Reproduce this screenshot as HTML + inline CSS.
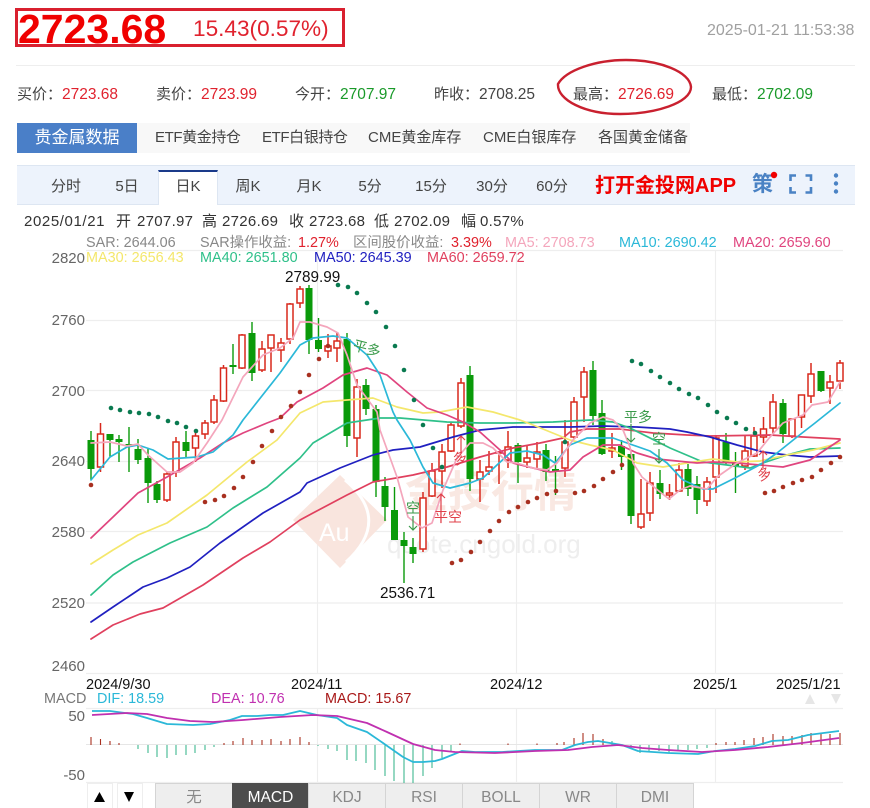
<!DOCTYPE html>
<html lang="zh"><head><meta charset="utf-8"><title>2723.68</title>
<style>
html,body{margin:0;padding:0;background:#fff}
#p{position:relative;width:870px;height:808px;overflow:hidden;background:#fff;font-family:"Liberation Sans","Noto Sans CJK SC",sans-serif;color:#444}
#p div,#p span.a{position:absolute;white-space:nowrap}
svg{position:absolute;left:0;top:0}
svg text{font-family:"Liberation Sans","Noto Sans CJK SC",sans-serif}
.q{top:86px;font-size:15px;line-height:18px}
.q b{font-weight:normal;font-size:15.5px}
.r{color:#e0222e}.g{color:#1a9a2a}
.t{top:123px;height:30px;line-height:30px;font-size:15px;color:#444}
.k{top:171px;height:34px;line-height:32px;font-size:15px;color:#444;text-align:center;width:60px}
.b{top:783px;height:25px;line-height:27px;width:76px;background:#eee;border:1px solid #d4d4d4;border-bottom:0;box-sizing:border-box;text-align:center;font-size:15.5px;color:#888}
</style></head><body><div id="p">
<div style="left:15px;top:8px;width:330px;height:39px;border:3px solid #d9202f;box-sizing:border-box"></div>
<div style="left:18px;top:6px;font-size:41px;line-height:47px;font-weight:bold;color:#f00000">2723.68</div>
<div style="left:193px;top:15px;font-size:22.6px;line-height:28px;color:#e0222e">15.43(0.57%)</div>
<div style="left:707px;top:21px;font-size:16px;line-height:20px;color:#a0a0a0">2025-01-21 11:53:38</div>
<div style="left:16px;top:65px;width:839px;height:1px;background:#eee"></div>

<div class="q" style="left:17px">买价：</div><div class="q r" style="left:62px"><b>2723.68</b></div>
<div class="q" style="left:156px">卖价：</div><div class="q r" style="left:201px"><b>2723.99</b></div>
<div class="q" style="left:295px">今开：</div><div class="q g" style="left:340px"><b>2707.97</b></div>
<div class="q" style="left:434px">昨收：</div><div class="q" style="left:479px"><b>2708.25</b></div>
<div class="q" style="left:573px">最高：</div><div class="q r" style="left:618px"><b>2726.69</b></div>
<div class="q" style="left:712px">最低：</div><div class="q g" style="left:757px"><b>2702.09</b></div>

<div style="left:137px;top:123px;width:553px;height:30px;background:#f8f8f8"></div>
<div style="left:17px;top:123px;width:120px;height:30px;background:#4a7fc8;color:#fff;text-align:center;line-height:30px;font-size:17px">贵金属数据</div>
<div class="t" style="left:155px;letter-spacing:-.4px">ETF黄金持仓</div>
<div class="t" style="left:262px;letter-spacing:-.4px">ETF白银持仓</div>
<div class="t" style="left:368px">CME黄金库存</div>
<div class="t" style="left:483px">CME白银库存</div>
<div class="t" style="left:598px">各国黄金储备</div>

<div style="left:17px;top:165px;width:838px;height:40px;background:#edf3fc;border-top:1px solid #dde6f2;border-bottom:1px solid #dde6f2;box-sizing:border-box"></div>
<div style="left:158px;top:170px;width:60px;height:35px;background:#fff;border-top:2px solid #1a3a8a;box-sizing:border-box;border-left:1px solid #dde6f2;border-right:1px solid #dde6f2"></div>
<div class="k" style="left:36px">分时</div><div class="k" style="left:97px">5日</div><div class="k" style="left:158px">日K</div><div class="k" style="left:218px">周K</div><div class="k" style="left:279px">月K</div><div class="k" style="left:340px">5分</div><div class="k" style="left:401px">15分</div><div class="k" style="left:462px">30分</div><div class="k" style="left:522px">60分</div>
<div style="left:595px;top:172px;font-size:20px;line-height:28px;font-weight:bold;color:#f00000">打开金投网APP</div>
<div style="left:752px;top:171px;font-size:21px;line-height:28px;color:#4a82c4;font-weight:bold">策</div>

<div style="left:24px;top:213px;font-size:15px;line-height:18px;color:#333;letter-spacing:.6px">2025/01/21</div>
<div style="left:116px;top:213px;font-size:15px;line-height:18px;color:#333">开</div><div style="left:137px;top:213px;font-size:15px;line-height:18px;color:#333;letter-spacing:.3px">2707.97</div>
<div style="left:202px;top:213px;font-size:15px;line-height:18px;color:#333">高</div><div style="left:222px;top:213px;font-size:15px;line-height:18px;color:#333;letter-spacing:.3px">2726.69</div>
<div style="left:289px;top:213px;font-size:15px;line-height:18px;color:#333">收</div><div style="left:309px;top:213px;font-size:15px;line-height:18px;color:#333;letter-spacing:.3px">2723.68</div>
<div style="left:374px;top:213px;font-size:15px;line-height:18px;color:#333">低</div><div style="left:394px;top:213px;font-size:15px;line-height:18px;color:#333;letter-spacing:.3px">2702.09</div>
<div style="left:461px;top:213px;font-size:15px;line-height:18px;color:#333">幅</div><div style="left:480px;top:213px;font-size:15px;line-height:18px;color:#333;letter-spacing:.3px">0.57%</div>

<svg width="870" height="808" viewBox="0 0 870 808" xmlns="http://www.w3.org/2000/svg">
<path d="M558 84C566 70 596 60 626 60C660 60 690 72 691 87C691 103 655 114 620 114C585 114 557 100 558 84Z" fill="none" stroke="#c9202f" stroke-width="2.4"/>
<circle cx="774" cy="175" r="3.2" fill="#f00000"/>
<path d="M796 175.500H790.500V181M805.500 175.500H811V181M796 192.500H790.500V187M805.500 192.500H811V187" fill="none" stroke="#4a82c4" stroke-width="2.600"/>
<circle cx="836" cy="175.500" r="2.200" fill="#4a82c4"/><circle cx="836" cy="183.500" r="2.200" fill="#4a82c4"/><circle cx="836" cy="191.500" r="2.200" fill="#4a82c4"/>

<!-- grid -->
<path d="M86 250.500H843M86 320.500H843M86 390.500H843M86 461.500H843M86 531.500H843M86 603H843M86 673.500H843M86 708.500H843M86 782.500H843" stroke="#eeeeee" stroke-width="1.200" fill="none"/>
<path d="M317.500 250V673M516.500 250V673M715.500 250V673M317.500 708V782M516.500 708V782M715.500 708V782" stroke="#eeeeee" stroke-width="1.200" fill="none"/>
<path d="M86 744.500H843" stroke="#e6e6e6" fill="none"/>

<!-- watermark -->
<polygon points="293,520 340,475 387,520 340,568" fill="#f9e5de"/>
<path d="M345 480Q392 520 346 562" fill="none" stroke="#fff" stroke-width="3"/>
<text x="319" y="541" font-size="25" fill="#fff">Au</text>
<text x="405" y="507" font-size="43" font-weight="bold" fill="#f9e8e2">金投行情</text>
<text x="387" y="553" font-size="26" fill="#eeeeee">quote.cngold.org</text>

<!-- axis -->
<g font-size="15" fill="#666" text-anchor="end">
<text x="85" y="263">2820</text><text x="85" y="325">2760</text><text x="85" y="396">2700</text><text x="85" y="466">2640</text><text x="85" y="537">2580</text><text x="85" y="608">2520</text><text x="85" y="671">2460</text><text x="85" y="721">50</text><text x="85" y="780">-50</text>
</g>
<!-- legend -->
<g font-size="14.400">
<text x="86" y="247" fill="#888">SAR: 2644.06</text>
<text x="200" y="247" fill="#888">SAR操作收益:</text><text x="298" y="247" fill="#e0222e">1.27%</text>
<text x="353" y="247" fill="#888">区间股价收益:</text><text x="451" y="247" fill="#e0222e">3.39%</text>
<text x="505" y="247" fill="#f4a6bc">MA5: 2708.73</text>
<text x="619" y="247" fill="#2bb8d8">MA10: 2690.42</text>
<text x="733" y="247" fill="#e0457f">MA20: 2659.60</text>
<text x="86" y="262" fill="#f4e76c">MA30: 2656.43</text>
<text x="200" y="262" fill="#2fc08a">MA40: 2651.80</text>
<text x="314" y="262" fill="#2020c0">MA50: 2645.39</text>
<text x="427" y="262" fill="#e0405e">MA60: 2659.72</text>
<text x="44" y="703" fill="#777">MACD</text>
<text x="97" y="703" fill="#2bb8d8">DIF: 18.59</text>
<text x="211" y="703" fill="#c030b0">DEA: 10.76</text>
<text x="325" y="703" fill="#a81818">MACD: 15.67</text>
</g>
<g font-size="14.500" fill="#111">
<text x="86" y="689">2024/9/30</text><text x="291" y="689">2024/11</text><text x="490" y="689">2024/12</text><text x="693" y="689">2025/1</text><text x="776" y="689">2025/1/21</text>
</g>
<g font-size="15.300" fill="#111">
<text x="285" y="282">2789.99</text><text x="380" y="598">2536.71</text>
</g>
<path d="M805 704L810 694L815 704ZM831 694L841 694L836 704Z" fill="#e6e6e6"/>

<!-- red candles -->
<path fill="none" stroke="#d8281c" stroke-width="1.500" d="M100.500 423V472M167 472V502M176 437V477M195.500 430V462M205 420V439M214 395V424M223.500 365V402M242 334V369M262 341V372M271 335V372M281 338V362M290 303V344M300 286V308M328 334V358M337 332V362M357 379V457M423 492V552M432 463V497M442 444V488M451 423V452M461 378V428M480 460V502M489 451V475M499 452V484M508 431V468M527 445V468M537 442V469M565 420V477M574 397V439M584 367V422M612 433V458M641 479V529M650 472V521M669.500 484V500M679 463V492M707 477V506M716 435V493M745 435V470M754 427V457M763.500 417V443M773 394V435M792 419V438M801.500 395V428M811 363V403M830 375V404M840 360V389"/>
<path fill="#fff" stroke="#d8281c" stroke-width="1.500" d="M97.500 434h6v33h-6zM164 474h6v26h-6zM173 442h6v30h-6zM192.500 436h6v12h-6zM202 423h6v11h-6zM211 400h6v22h-6zM220.500 368h6v33h-6zM239 335h6v33h-6zM259 349h6v21h-6zM268 335h6v13h-6zM278 343h6v7h-6zM287 304h6v35h-6zM297 289h6v14h-6zM325 346h6v5h-6zM334 341h6v7h-6zM354 387h6v51h-6zM420 498h6v51h-6zM429 471h6v25h-6zM439 452h6v19h-6zM448 425h6v26h-6zM458 383h6v43h-6zM477 472h6v7h-6zM486 467h6v4h-6zM496 452h6v1h-6zM505 447h6v13h-6zM524 458h6v4h-6zM534 452h6v7h-6zM562 442h6v26h-6zM571 402h6v35h-6zM581 372h6v25h-6zM609 448h6v3h-6zM638 514h6v13h-6zM647 483h6v30h-6zM666.500 493h6v2h-6zM676 470h6v21h-6zM704 482h6v19h-6zM713 438h6v39h-6zM742 451h6v15h-6zM751 436h6v20h-6zM760.500 429h6v8h-6zM770 402h6v26h-6zM789 419h6v17h-6zM798.500 395h6v22h-6zM808 374h6v22h-6zM827 382h6v6h-6zM837 363h6v18h-6z"/>
<!-- green candles -->
<path fill="none" stroke="#0a9a0a" stroke-width="1.400" d="M91 431V480M110 434V457M119 435V462M129 427V472M138 439V464M148 448V503M157 481V503M186 431V457M233 344V374M252 322V381M309 285V354M318.500 318V352M347 333V447M366 379V415M376 405V497M385 477V521M394.500 487V540M404 532V583M413 538V563M470 366V491M518 443V483M546 444V481M555.500 456V495M593 361V425M602 400V455M621.500 440V470M631 450V524M660 470V499M688 464V496M697 476V514M726 433V465M735.500 452V493M783 399V443M821 371V392"/>
<path fill="#0a9a0a" d="M87.500 440h7v29h-7zM106.500 434h7v6h-7zM115.500 439h7v3h-7zM125.500 444h7v2h-7zM134.500 449h7v11h-7zM144.500 458h7v25h-7zM153.500 484h7v16h-7zM182.500 442h7v9h-7zM229.500 365h7v2h-7zM248.500 333h7v40h-7zM305.500 288h7v52h-7zM315 340h7v9h-7zM343.500 339h7v97h-7zM362.500 385h7v24h-7zM372.500 409h7v73h-7zM381.500 486h7v21h-7zM391 510h7v30h-7zM400.500 540h7v6h-7zM409.500 547h7v7h-7zM466.500 375h7v104h-7zM514.500 445h7v17h-7zM542.500 450h7v22h-7zM552 469h7v2h-7zM589.500 370h7v46h-7zM598.500 413h7v41h-7zM618 446h7v11h-7zM627.500 454h7v62h-7zM656.500 483h7v11h-7zM684.500 469h7v20h-7zM693.500 484h7v16h-7zM722.500 442h7v21h-7zM732 462h7v5h-7zM779.500 403h7v31h-7zM817.500 371h7v20h-7z"/>

<!-- MAs -->
<g fill="none" stroke-width="1.700" stroke-linejoin="round" stroke-linecap="round">
<polyline stroke="#e0405e" points="91,639 113,625 140,614 163,608 203,585 243,558 270,542 300,520 313,513 347,495 373,482 413,475 447,467 480,457 513,448 540,443 563,438 570,432 587,429 620,429 653,433 687,435 710,436 770,435 803,437 840,439"/>
<polyline stroke="#2020c0" points="91,622 113,607 143,587 167,578 190,567 220,543 263,513 300,492 307,483 340,468 373,455 393,450 420,447 453,437 480,430 513,427 547,427 570,427 603,426 637,427 670,429 687,432 710,437 737,445 763,452 787,455 810,457 840,456"/>
<polyline stroke="#2fc08a" points="91,595 113,575 133,562 170,543 207,527 233,508 267,487 300,458 313,443 347,423 380,418 400,418 447,422 480,423 513,423 553,422 590,420 613,422 630,428 670,448 703,462 727,465 750,468 763,463 787,455 810,449 840,448"/>
<polyline stroke="#f4e76c" points="91,564 113,550 138,535 167,523 207,495 247,462 277,440 300,413 323,402 347,400 373,398 397,407 423,413 440,412 467,407 493,412 520,420 533,425 570,440 590,445 613,450 637,463 663,467 687,463 713,459 737,462 760,461 787,455 813,450 840,443"/>
<polyline stroke="#e0457f" points="91,538 113,517 138,493 167,477 200,458 223,443 243,433 267,423 280,418 297,402 323,388 343,375 367,368 387,375 407,392 427,408 447,415 463,422 480,432 500,450 513,463 533,468 550,472 570,470 583,457 603,445 620,445 637,453 657,459 697,463 713,462 737,463 783,467 810,460 840,440"/>
<polyline stroke="#2bb8d8" points="91,480 110,457 127,447 138,445 153,450 168,459 197,457 213,452 233,435 243,420 280,373 300,345 313,338 333,336 347,338 367,355 380,375 393,412 397,420 410,440 423,467 433,483 450,488 470,483 483,478 497,465 510,453 527,451 543,455 555,463 570,445 587,438 613,438 627,443 650,451 667,463 683,480 703,489 713,489 737,477 763,463 777,453 797,437 815,423 840,403"/>
<polyline stroke="#f4a6bc" points="91,443 110,442 127,446 138,444 148,455 167,472 180,472 193,463 207,443 222,420 243,377 263,355 280,348 293,338 300,322 310,322 327,327 338,333 347,355 357,385 377,412 380,430 397,477 408,517 422,528 432,523 443,490 457,458 470,443 483,443 493,448 507,462 517,463 533,468 547,470 557,463 573,440 590,423 603,417 613,420 623,430 630,447 633,463 642,477 660,492 669,499 680,490 690,486 707,489 717,477 737,463 757,453 770,437 783,423 803,415 812,405 828,402 840,382"/>
</g>

<!-- SAR -->
<g fill="#0a7a50"><circle cx="111" cy="408" r="2.300"/><circle cx="120" cy="410" r="2.300"/><circle cx="130" cy="412" r="2.300"/><circle cx="139" cy="413" r="2.300"/><circle cx="149" cy="414" r="2.300"/><circle cx="158" cy="417" r="2.300"/><circle cx="168" cy="421" r="2.300"/><circle cx="177" cy="423" r="2.300"/><circle cx="186" cy="427" r="2.300"/><circle cx="196" cy="431" r="2.300"/><circle cx="338" cy="285" r="2.300"/><circle cx="348" cy="287" r="2.300"/><circle cx="357" cy="293" r="2.300"/><circle cx="367" cy="303" r="2.300"/><circle cx="376" cy="312" r="2.300"/><circle cx="386" cy="327" r="2.300"/><circle cx="395" cy="346" r="2.300"/><circle cx="404" cy="370" r="2.300"/><circle cx="414" cy="400" r="2.300"/><circle cx="423" cy="425" r="2.300"/><circle cx="433" cy="448" r="2.300"/><circle cx="442" cy="467" r="2.300"/><circle cx="565" cy="442" r="2.300"/><circle cx="632" cy="361" r="2.300"/><circle cx="641" cy="364" r="2.300"/><circle cx="651" cy="371" r="2.300"/><circle cx="660" cy="377" r="2.300"/><circle cx="670" cy="383" r="2.300"/><circle cx="679" cy="389" r="2.300"/><circle cx="689" cy="394" r="2.300"/><circle cx="698" cy="398" r="2.300"/><circle cx="708" cy="405" r="2.300"/><circle cx="717" cy="412" r="2.300"/><circle cx="727" cy="418" r="2.300"/><circle cx="736" cy="423" r="2.300"/><circle cx="746" cy="429" r="2.300"/><circle cx="755" cy="433" r="2.300"/></g>
<g fill="#a83020"><circle cx="91" cy="485" r="2.300"/><circle cx="205" cy="502" r="2.300"/><circle cx="215" cy="500" r="2.300"/><circle cx="224" cy="496" r="2.300"/><circle cx="234" cy="488" r="2.300"/><circle cx="243" cy="477" r="2.300"/><circle cx="253" cy="462" r="2.300"/><circle cx="262" cy="446" r="2.300"/><circle cx="272" cy="431" r="2.300"/><circle cx="281" cy="417" r="2.300"/><circle cx="291" cy="406" r="2.300"/><circle cx="300" cy="392" r="2.300"/><circle cx="309" cy="375" r="2.300"/><circle cx="319" cy="359" r="2.300"/><circle cx="328" cy="346" r="2.300"/><circle cx="452" cy="563" r="2.300"/><circle cx="461" cy="560" r="2.300"/><circle cx="471" cy="552" r="2.300"/><circle cx="480" cy="542" r="2.300"/><circle cx="490" cy="531" r="2.300"/><circle cx="499" cy="521" r="2.300"/><circle cx="509" cy="512" r="2.300"/><circle cx="518" cy="507" r="2.300"/><circle cx="528" cy="502" r="2.300"/><circle cx="537" cy="498" r="2.300"/><circle cx="547" cy="494" r="2.300"/><circle cx="556" cy="491" r="2.300"/><circle cx="575" cy="493" r="2.300"/><circle cx="584" cy="491" r="2.300"/><circle cx="594" cy="486" r="2.300"/><circle cx="603" cy="479" r="2.300"/><circle cx="613" cy="472" r="2.300"/><circle cx="622" cy="465" r="2.300"/><circle cx="765" cy="493" r="2.300"/><circle cx="774" cy="491" r="2.300"/><circle cx="783" cy="487" r="2.300"/><circle cx="793" cy="483" r="2.300"/><circle cx="802" cy="480" r="2.300"/><circle cx="812" cy="477" r="2.300"/><circle cx="821" cy="470" r="2.300"/><circle cx="831" cy="463" r="2.300"/><circle cx="840" cy="457" r="2.300"/></g>

<!-- annotations -->
<g font-size="14">
<text x="353" y="353" fill="#3a9a4a" transform="rotate(15 366 348)">平多</text>
<text x="406" y="513" fill="#3a9a4a">空</text>
<text x="434" y="522" fill="#e0404a">平空</text>
<text x="453" y="463" fill="#e0404a" transform="rotate(-20 460 458)">多</text>
<text x="624" y="422" fill="#3a9a4a">平多</text>
<text x="652" y="444" fill="#3a9a4a">空</text>
<text x="757" y="479" fill="#e0404a" transform="rotate(-20 764 473)">多</text>
</g>
<g fill="none" stroke-width="1.200">
<path stroke="#3a9a4a" d="M413 516V530M409 526L413 530L417 526M631 424V442M627 438L631 442L635 438M659 449V463M655 459L659 463L663 459"/>
<path stroke="#e0404a" d="M441 523V494M437 498L441 494L445 498M461 452V436M457 440L461 436L465 440M763 468V451M759 455L763 451L767 455"/>
</g>

<!-- MACD hist -->
<path fill="none" stroke="#a83020" stroke-width="1.100" d="M91 745V737M100.500 745V739M110 745V741M119 745V743M224 745V743M233 745V741M243 745V738M252 745V740M262 745V740M271 745V739M281 745V741M290 745V739M300 745V737M309 745V742M460 745V743.500M508 745V743.500M537 745V743.500M557 745V743M564 745V742M574 745V738M583 745V733M593 745V734M603 745V739M716 745V743M726 745V742M735 745V742M744 745V740M754 745V738M763 745V737M773 745V734M783 745V736M792 745V736M802 745V735M811 745V733M821 745V734M830 745V734M840 745V733"/>
<path fill="none" stroke="#3fb890" stroke-width="1.100" d="M138 745V749M148 745V753M157 745V757M167 745V758M176 745V755M186 745V755M195 745V753M205 745V750M214 745V747M318 745V746M328 745V749M337 745V751M347 745V760M356 745V761M366 745V763M375 745V770M385 745V776M394 745V781M404 745V783M413 745V783M423 745V776M432 745V768M442 745V758M451 745V752M612 745V741M631 745V749M640 745V753M649 745V752M659 745V751M669 745V753M678 745V751M688 745V750M697 745V749M707 745V748"/>
<g fill="none" stroke-width="1.800" stroke-linejoin="round">
<polyline stroke="#2bb8d8" points="92,711 110,711 133,714 147,718 167,724 193,725 210,724 230,720 242,716 257,716 270,715 283,715 300,711 317,715 337,718 347,725 367,732 383,743 403,757 413,762 423,762 435,761 442,759 462,751 475,752 502,752 535,750 562,750 575,745 588,742 598,741 622,745 638,751 668,753 698,754 715,751 735,749 755,746 772,741 788,740 808,735 839,731"/>
<polyline stroke="#c030b0" points="92,715 127,713 147,714 167,718 190,721 213,722 243,720 280,717 313,715 337,716 367,723 387,732 413,744 435,750 455,752 495,753 535,751 568,750 592,747 618,745 642,748 668,750 702,752 735,750 768,747 802,743 839,738"/>
</g>
<path d="M94 802L99.500 792L105 802ZM124 792L134 792L129 802Z" fill="#000"/>
</svg>

<div style="left:87px;top:783px;width:26px;height:25px;border:1px solid #eee;border-bottom:0;box-sizing:border-box"></div>
<div style="left:117px;top:783px;width:26px;height:25px;border:1px solid #eee;border-bottom:0;box-sizing:border-box"></div>
<div class="b" style="left:155px;width:78px">无</div>
<div class="b" style="left:232px;width:77px;background:#4d4d4d;color:#fff;border-color:#4d4d4d">MACD</div>
<div class="b" style="left:308px;width:78px">KDJ</div>
<div class="b" style="left:385px;width:78px">RSI</div>
<div class="b" style="left:462px;width:78px">BOLL</div>
<div class="b" style="left:539px;width:78px">WR</div>
<div class="b" style="left:616px;width:78px">DMI</div>
</div></body></html>
